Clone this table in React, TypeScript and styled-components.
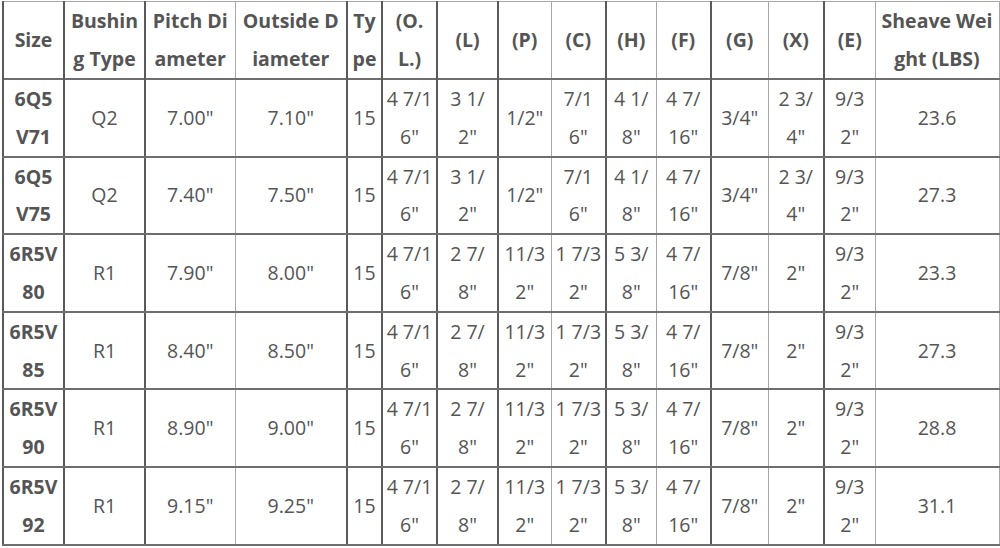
import React from "react";
import styled, { createGlobalStyle } from "styled-components";

const Global = createGlobalStyle`
  html, body { margin: 0; padding: 0; background: #ffffff; }
  body { font-family: "Open Sans", "Liberation Sans", sans-serif; }
`;

const Wrap = styled.div`
  padding: 1px 0 0 2px;
`;

const Table = styled.table`
  border-collapse: collapse;
  table-layout: fixed;
  width: 996px;
  color: #555555;
  font-size: 19.5px;
  border: 1px solid #a8a8a8;
`;

const Cell = styled.td<{ $strong?: boolean; $bold?: boolean }>`
  padding: 0 1px;
  line-height: 37.8px;
  height: 75.6px;
  text-align: center;
  vertical-align: middle;
  white-space: nowrap;
  overflow: visible;
  font-weight: ${(p) => (p.$bold ? 700 : 400)};
  border-left: ${(p) => (p.$strong ? "2px solid #5a5a5a" : "1px solid #a8a8a8")};
  border-top: 2px solid #6e6e6e;
  border-bottom: 2px solid #6e6e6e;
`;

const HeadCell = styled.th<{ $strong?: boolean }>`
  padding: 0 1px;
  line-height: 38px;
  height: 76px;
  text-align: center;
  vertical-align: middle;
  white-space: nowrap;
  font-weight: 700;
  color: #555555;
  border-left: ${(p) => (p.$strong ? "2px solid #5a5a5a" : "1px solid #a8a8a8")};
  border-top: 1px solid #a8a8a8;
  border-bottom: 1px solid #9a9a9a;
`;

const widths = [61, 81, 90, 112, 35, 55, 61, 53, 55, 50, 55, 57, 56, 51, 124];
const strong = [true, true, true, false, true, true, true, true, false, true, false, true, false, true, false];

const headers: string[][] = [
  ["Size"],
  ["Bushin", "g Type"],
  ["Pitch Di", "ameter"],
  ["Outside D", "iameter"],
  ["Ty", "pe"],
  ["(O.", "L.)"],
  ["(L)"],
  ["(P)"],
  ["(C)"],
  ["(H)"],
  ["(F)"],
  ["(G)"],
  ["(X)"],
  ["(E)"],
  ["Sheave Wei", "ght (LBS)"],
];

const qRow = (size: string[], pitch: string, outside: string, weight: string): string[][] => [
  size,
  ["Q2"],
  [pitch],
  [outside],
  ["15"],
  ["4 7/1", "6\""],
  ["3 1/", "2\""],
  ["1/2\""],
  ["7/1", "6\""],
  ["4 1/", "8\""],
  ["4 7/", "16\""],
  ["3/4\""],
  ["2 3/", "4\""],
  ["9/3", "2\""],
  [weight],
];

const rRow = (size: string[], pitch: string, outside: string, weight: string): string[][] => [
  size,
  ["R1"],
  [pitch],
  [outside],
  ["15"],
  ["4 7/1", "6\""],
  ["2 7/", "8\""],
  ["11/3", "2\""],
  ["1 7/3", "2\""],
  ["5 3/", "8\""],
  ["4 7/", "16\""],
  ["7/8\""],
  ["2\""],
  ["9/3", "2\""],
  [weight],
];

const rows: string[][][] = [
  qRow(["6Q5", "V71"], "7.00\"", "7.10\"", "23.6"),
  qRow(["6Q5", "V75"], "7.40\"", "7.50\"", "27.3"),
  rRow(["6R5V", "80"], "7.90\"", "8.00\"", "23.3"),
  rRow(["6R5V", "85"], "8.40\"", "8.50\"", "27.3"),
  rRow(["6R5V", "90"], "8.90\"", "9.00\"", "28.8"),
  rRow(["6R5V", "92"], "9.15\"", "9.25\"", "31.1"),
];

const Lines: React.FC<{ lines: string[] }> = ({ lines }) => (
  <>
    {lines.map((l, i) => (
      <React.Fragment key={i}>
        {i > 0 && <br />}
        {l}
      </React.Fragment>
    ))}
  </>
);

export default function App() {
  return (
    <>
      <Global />
      <Wrap>
        <Table>
          <colgroup>
            {widths.map((w, i) => (
              <col key={i} style={{ width: w }} />
            ))}
          </colgroup>
          <thead>
            <tr>
              {headers.map((h, i) => (
                <HeadCell key={i} $strong={strong[i]}>
                  <Lines lines={h} />
                </HeadCell>
              ))}
            </tr>
          </thead>
          <tbody>
            {rows.map((r, ri) => (
              <tr key={ri}>
                {r.map((c, ci) => (
                  <Cell key={ci} $strong={strong[ci]} $bold={ci === 0}>
                    <Lines lines={c} />
                  </Cell>
                ))}
              </tr>
            ))}
          </tbody>
        </Table>
      </Wrap>
    </>
  );
}
